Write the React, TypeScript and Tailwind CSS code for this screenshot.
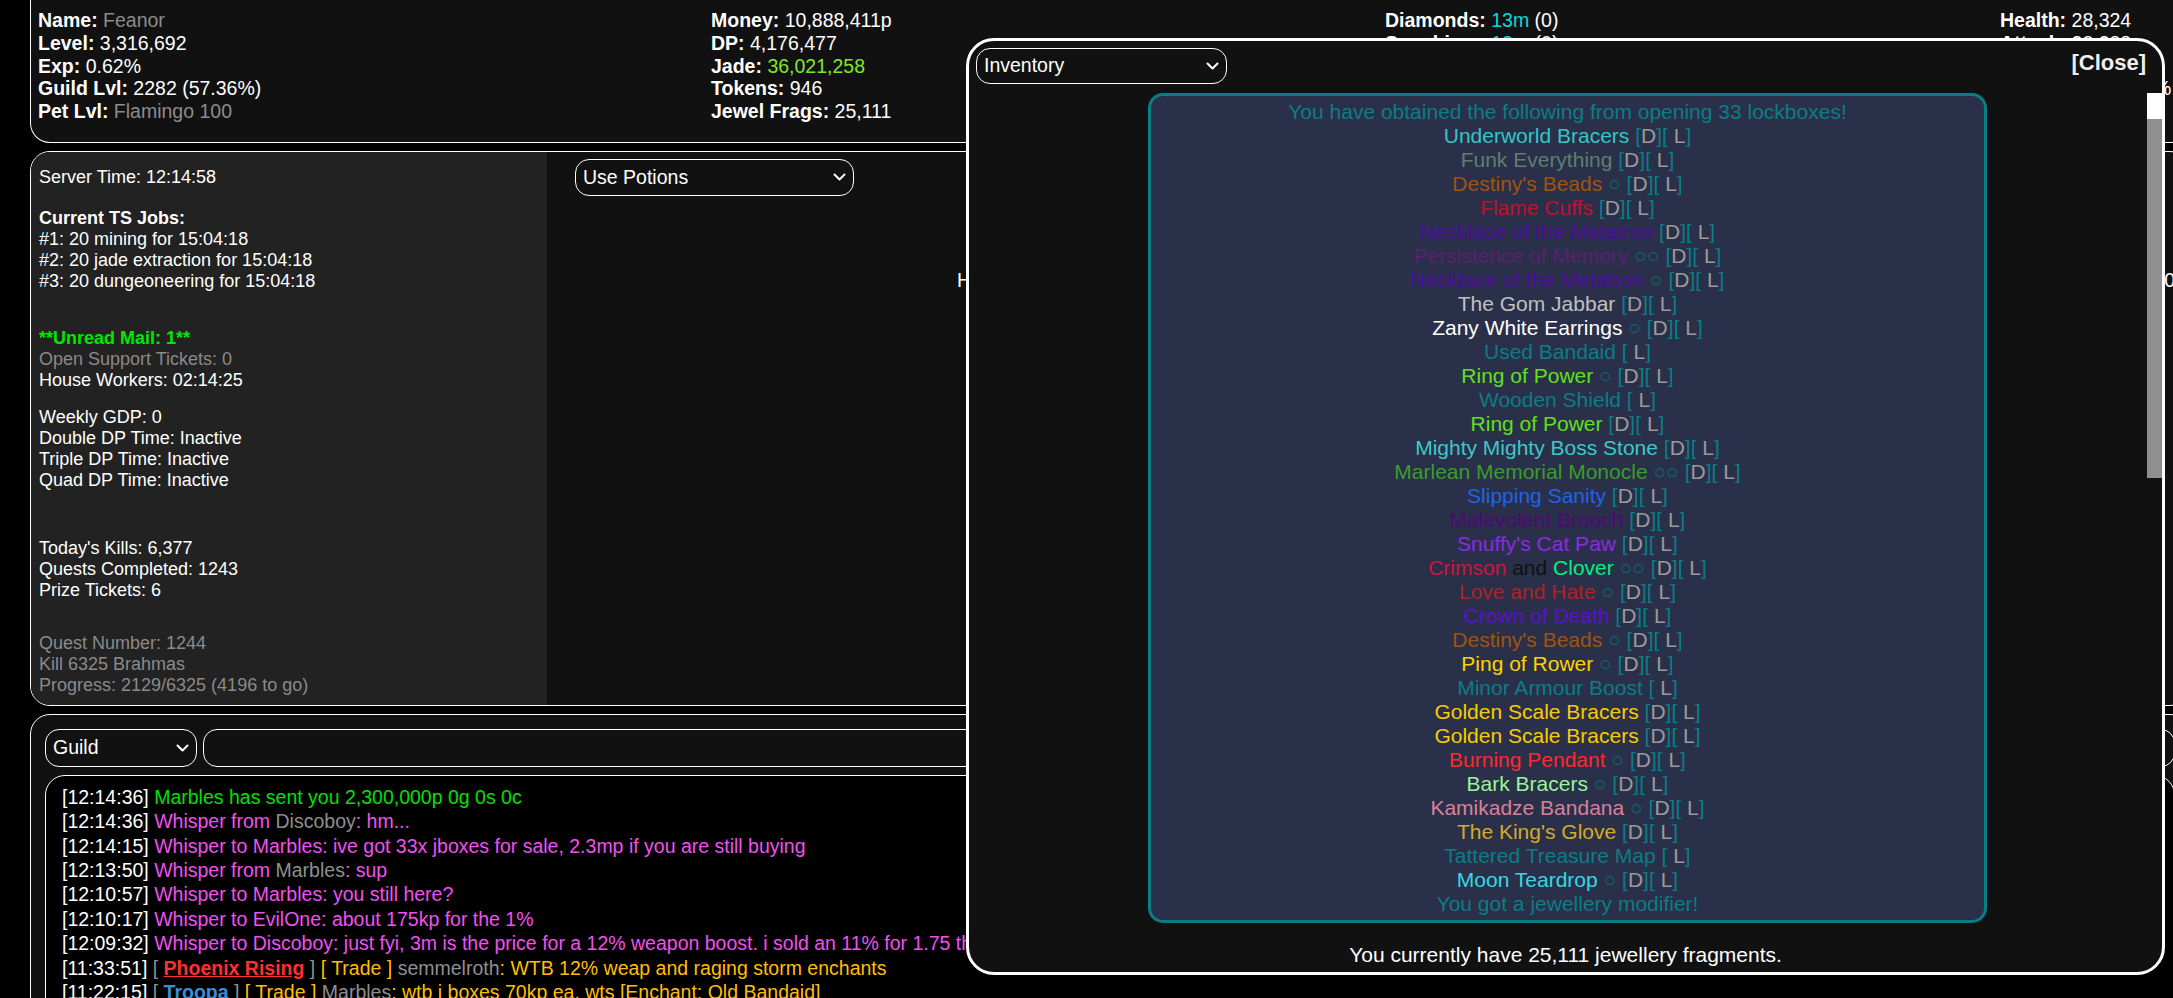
import React from 'react';

type Item = { n: React.ReactNode; c: string; r?: number; noD?: boolean };

const items: Item[] = [
  { n: 'Underworld Bracers', c: 'text-[#33c6c6]' },
  { n: 'Funk Everything', c: 'text-[#5e7f70]' },
  { n: "Destiny's Beads", c: 'text-[#a0540e]', r: 1 },
  { n: 'Flame Cuffs', c: 'text-[#c0102e]' },
  { n: 'Necklace of the Metatron', c: 'text-[#4a0c9c]' },
  { n: 'Persistence of Memory', c: 'text-[#5c2072]', r: 2 },
  { n: 'Necklace of the Metatron', c: 'text-[#4a0c9c]', r: 1 },
  { n: 'The Gom Jabbar', c: 'text-[#c0c0c0]' },
  { n: 'Zany White Earrings', c: 'text-white', r: 1 },
  { n: 'Used Bandaid', c: 'text-[#0a7d86]', noD: true },
  { n: 'Ring of Power', c: 'text-[#5ee01e]', r: 1 },
  { n: 'Wooden Shield', c: 'text-[#0a7d86]', noD: true },
  { n: 'Ring of Power', c: 'text-[#5ee01e]' },
  { n: 'Mighty Mighty Boss Stone', c: 'text-[#3cc8c8]' },
  { n: 'Marlean Memorial Monocle', c: 'text-[#3a9c2a]', r: 2 },
  { n: 'Slipping Sanity', c: 'text-[#1e64e6]' },
  { n: 'Malevolent Brooch', c: 'text-[#4c0a72]' },
  { n: "Snuffy's Cat Paw", c: 'text-[#8a2be2]' },
  {
    n: (
      <>
        <span className="text-[#d0143c]">Crimson</span>
        <span className="text-[#111]"> and </span>
        <span className="text-[#00f07f]">Clover</span>
      </>
    ),
    c: '',
    r: 2,
  },
  { n: 'Love and Hate', c: 'text-[#b02226]', r: 1 },
  { n: 'Crown of Death', c: 'text-[#5c10cc]' },
  { n: "Destiny's Beads", c: 'text-[#a0540e]', r: 1 },
  { n: 'Ping of Rower', c: 'text-[#ffd200]', r: 1 },
  { n: 'Minor Armour Boost', c: 'text-[#0a7d86]', noD: true },
  { n: 'Golden Scale Bracers', c: 'text-[#f8cc00]' },
  { n: 'Golden Scale Bracers', c: 'text-[#f8cc00]' },
  { n: 'Burning Pendant', c: 'text-[#ff2a2a]', r: 1 },
  { n: 'Bark Bracers', c: 'text-[#98f598]', r: 1 },
  { n: 'Kamikadze Bandana', c: 'text-[#d9809c]', r: 1 },
  { n: "The King's Glove", c: 'text-[#d8a82a]' },
  { n: 'Tattered Treasure Map', c: 'text-[#0a7d86]', noD: true },
  { n: 'Moon Teardrop', c: 'text-[#33d9e2]', r: 1 },
];

const Chevron = () => (
  <svg className="pointer-events-none absolute right-[8px] top-1/2 -translate-y-1/2" width="13" height="8" viewBox="0 0 13 8">
    <path d="M1.5 1.5l5 5 5-5" stroke="white" strokeWidth="2" fill="none" strokeLinecap="round" strokeLinejoin="round" />
  </svg>
);

const Select = ({ label, className }: { label: string; className: string }) => (
  <div className={`relative shrink-0 ${className}`}>
    <select className="h-full w-full appearance-none rounded-[14px] border border-white bg-transparent pl-[7px] text-[19.5px] text-white outline-none">
      <option className="bg-[#111]">{label}</option>
    </select>
    <Chevron />
  </div>
);

const Stat = ({ k, v, vc = '' }: { k: string; v: React.ReactNode; vc?: string }) => (
  <div className="whitespace-nowrap">
    <span className="font-bold">{k}:</span> <span className={vc}>{v}</span>
  </div>
);

const Gray = ({ children }: { children: React.ReactNode }) => <span className="text-[#8f8f8f]">{children}</span>;
const Mag = ({ children }: { children: React.ReactNode }) => <span className="text-[#f050f0]">{children}</span>;
const Gold = ({ children }: { children: React.ReactNode }) => <span className="text-[#ffbf00]">{children}</span>;

const chat: { t: string; body: React.ReactNode }[] = [
  { t: '12:14:36', body: <span className="text-[#00e000]">Marbles has sent you 2,300,000p 0g 0s 0c</span> },
  { t: '12:14:36', body: <><Mag>Whisper from </Mag><Gray>Discoboy</Gray><Mag>: hm...</Mag></> },
  { t: '12:14:15', body: <Mag>Whisper to Marbles: ive got 33x jboxes for sale, 2.3mp if you are still buying</Mag> },
  { t: '12:13:50', body: <><Mag>Whisper from </Mag><Gray>Marbles</Gray><Mag>: sup</Mag></> },
  { t: '12:10:57', body: <Mag>Whisper to Marbles: you still here?</Mag> },
  { t: '12:10:17', body: <Mag>Whisper to EvilOne: about 175kp for the 1%</Mag> },
  { t: '12:09:32', body: <Mag>Whisper to Discoboy: just fyi, 3m is the price for a 12% weapon boost. i sold an 11% for 1.75 the other day</Mag> },
  {
    t: '11:33:51',
    body: (
      <>
        <Gray>[ </Gray>
        <span className="font-bold text-[#ff3030] underline">Phoenix Rising</span>
        <Gray> ]</Gray> <Gold>[ Trade ]</Gold> <Gray>semmelroth</Gray>
        <Gold>: WTB 12% weap and raging storm enchants</Gold>
      </>
    ),
  },
  {
    t: '11:22:15',
    body: (
      <>
        <Gray>[ </Gray>
        <span className="font-bold text-[#3b8ed6] underline">Troopa</span>
        <Gray> ]</Gray> <Gold>[ Trade ]</Gold> <Gray>Marbles</Gray>
        <Gold>: wtb j boxes 70kp ea. wts [Enchant: Old Bandaid]</Gold>
      </>
    ),
  },
];

export default function App() {
  return (
    <div className="relative h-[998px] w-full overflow-hidden bg-black text-white [font-family:'Liberation_Sans',Arial,sans-serif]">
      {/* stats header */}
      <div className="ml-[30px] grid w-[2160px] grid-cols-[673px_674px_615px_1fr] rounded-b-[20px] border-x border-b border-white bg-[#111] pt-[9px] pb-[19px] pl-[7px] text-[19.5px] leading-[22.75px]">
        <div>
          <Stat k="Name" v="Feanor" vc="text-[#8c8c8c]" />
          <Stat k="Level" v="3,316,692" />
          <Stat k="Exp" v="0.62%" />
          <Stat k="Guild Lvl" v="2282 (57.36%)" />
          <Stat k="Pet Lvl" v="Flamingo 100" vc="text-[#8c8c8c]" />
        </div>
        <div>
          <Stat k="Money" v="10,888,411p" />
          <Stat k="DP" v="4,176,477" />
          <Stat k="Jade" v="36,021,258" vc="text-[#80e62a]" />
          <Stat k="Tokens" v="946" />
          <Stat k="Jewel Frags" v="25,111" />
        </div>
        <div>
          <Stat k="Diamonds" v={<><span className="text-[#00dede]">13m</span> (0)</>} />
          <Stat k="Sapphires" v={<><span className="text-[#00dede]">13m</span> (0)</>} />
          <Stat k="Rubies" v={<><span className="text-[#00dede]">12m</span> (0)</>} />
          <Stat k="Emeralds" v={<><span className="text-[#00dede]">12m</span> (0)</>} />
          <Stat k="Amethysts" v={<><span className="text-[#00dede]">11m</span> (0)</>} />
        </div>
        <div>
          <Stat k="Health" v="28,324" />
          <Stat k="Attack" v="28,388" />
          <Stat k="Defence" v="28,216" />
          <Stat k="Crit Chance" v="125%" />
          <Stat k="Dodge" v="12,000" />
        </div>
      </div>

      {/* info + main panel */}
      <div className="mt-[8px] ml-[30px] flex h-[555px] w-[2160px] overflow-hidden rounded-[20px] border border-white bg-[#111]">
        <div className="w-[516px] shrink-0 bg-[#222] pt-[15px] pl-[8px] text-[18px] leading-[21px]">
          <div>Server Time: 12:14:58</div>
          <div className="mt-[20px] font-bold">Current TS Jobs:</div>
          <div>#1: 20 mining for 15:04:18</div>
          <div>#2: 20 jade extraction for 15:04:18</div>
          <div>#3: 20 dungeoneering for 15:04:18</div>
          <div className="mt-[36px] font-bold text-[#00e600]">**Unread Mail: 1**</div>
          <div className="text-[#8a8a8a]">Open Support Tickets: 0</div>
          <div>House Workers: 02:14:25</div>
          <div className="mt-[16px]">Weekly GDP: 0</div>
          <div>Double DP Time: Inactive</div>
          <div>Triple DP Time: Inactive</div>
          <div>Quad DP Time: Inactive</div>
          <div className="mt-[47px]">Today's Kills: 6,377</div>
          <div>Quests Completed: 1243</div>
          <div>Prize Tickets: 6</div>
          <div className="mt-[32px] text-[#8a8a8a]">Quest Number: 1244</div>
          <div className="text-[#8a8a8a]">Kill 6325 Brahmas</div>
          <div className="text-[#8a8a8a]">Progress: 2129/6325 (4196 to go)</div>
        </div>
        <div className="flex flex-1 flex-col pt-[7px] pr-[14px] pl-[28px]">
          <Select label="Use Potions" className="h-[37px] w-[279px]" />
          <div className="mt-[73px] flex justify-between pl-[382px] text-[19.5px] leading-[22px]">
            <span>Hunting Grounds: Brahma Plains</span>
            <span>0</span>
          </div>
        </div>
      </div>

      {/* chat panel */}
      <div className="mt-[8px] ml-[30px] h-[400px] w-[2160px] rounded-[20px] border border-white bg-[#111] px-[14px] pt-[14px]">
        <div className="flex h-[38px] gap-[6px]">
          <Select label="Guild" className="h-[38px] w-[152px]" />
          <input className="flex-1 rounded-[14px] border border-white bg-transparent text-[19.5px] text-white outline-none" />
        </div>
        <div className="mt-[8px] h-[320px] rounded-[20px] border border-white bg-black pt-[9px] pl-[16px] text-[19.5px] leading-[24.4px] whitespace-nowrap">
          {chat.map((l, i) => (
            <div key={i}>
              [{l.t}] {l.body}
            </div>
          ))}
        </div>
      </div>

      {/* inventory modal */}
      <div className="absolute top-[38px] left-[966px] flex h-[937px] w-[1199px] flex-col rounded-[28px] border-[3px] border-white bg-[#111]">
        <div className="flex items-start justify-between pt-[7px] pr-[16px] pl-[7px]">
          <Select label="Inventory" className="h-[36px] w-[251px]" />
          <button className="pt-[2px] text-[22px] leading-[25px] font-bold text-[#f0f0f0]">[Close]</button>
        </div>
        <div className="mt-[9px] flex h-[845px]">
          <div className="flex-1 overflow-hidden">
            <div className="ml-[179px] w-[839px] rounded-[15px] border-[3px] border-[#0b7d84] bg-[#2a3049] pt-[4px] pb-[4px] text-center text-[21px] leading-[24px] whitespace-nowrap">
              <div className="text-[#0a7d86]">You have obtained the following from opening 33 lockboxes!</div>
              {items.map((it, i) => (
                <div key={i}>
                  <span className={it.c}>{it.n}</span>
                  {it.r ? <span className="text-[#0a6c74]"> {'○'.repeat(it.r)}</span> : null}{' '}
                  {!it.noD && (
                    <>
                      <span className="text-[#0a7d86]">[</span>
                      <span className="text-[#9a9a9a]">D</span>
                      <span className="text-[#0a7d86]">]</span>
                    </>
                  )}
                  <span className="text-[#0a7d86]">[</span>
                  <span className="text-[#9a9a9a]"> L</span>
                  <span className="text-[#0a7d86]">]</span>
                </div>
              ))}
              <div className="text-[#0a7d86]">You got a jewellery modifier!</div>
            </div>
          </div>
          <div className="flex w-[15px] shrink-0 flex-col">
            <div className="h-[26px] bg-white" />
            <div className="h-[359px] bg-[#8f8f8f]" />
          </div>
        </div>
        <div className="flex flex-1 items-center justify-center text-[21px]">
          You currently have 25,111 jewellery fragments.
        </div>
      </div>
    </div>
  );
}
